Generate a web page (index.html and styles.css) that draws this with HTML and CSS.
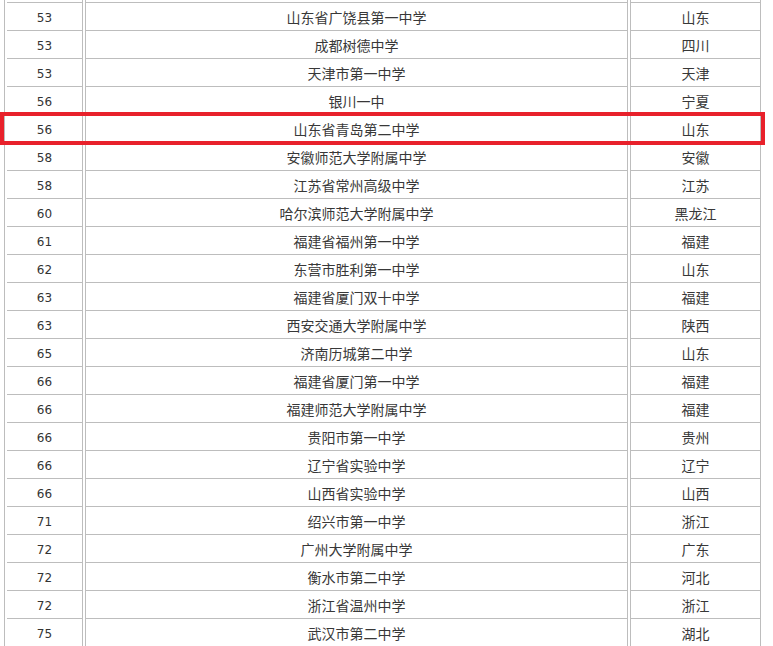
FILE: index.html
```html
<!DOCTYPE html>
<html lang="zh">
<head>
<meta charset="utf-8">
<link rel="stylesheet" href="styles.css">
</head>
<body>
<div class="wrap">
<table class="rank">
<tbody>
<tr><td class="c1">&nbsp;</td><td class="c2">&nbsp;</td><td class="c3">&nbsp;</td></tr>
<tr><td class="c1">53</td><td class="c2">山东省广饶县第一中学</td><td class="c3">山东</td></tr>
<tr><td class="c1">53</td><td class="c2">成都树德中学</td><td class="c3">四川</td></tr>
<tr><td class="c1">53</td><td class="c2">天津市第一中学</td><td class="c3">天津</td></tr>
<tr><td class="c1">56</td><td class="c2">银川一中</td><td class="c3">宁夏</td></tr>
<tr><td class="c1">56</td><td class="c2">山东省青岛第二中学</td><td class="c3">山东</td></tr>
<tr><td class="c1">58</td><td class="c2">安徽师范大学附属中学</td><td class="c3">安徽</td></tr>
<tr><td class="c1">58</td><td class="c2">江苏省常州高级中学</td><td class="c3">江苏</td></tr>
<tr><td class="c1">60</td><td class="c2">哈尔滨师范大学附属中学</td><td class="c3">黑龙江</td></tr>
<tr><td class="c1">61</td><td class="c2">福建省福州第一中学</td><td class="c3">福建</td></tr>
<tr><td class="c1">62</td><td class="c2">东营市胜利第一中学</td><td class="c3">山东</td></tr>
<tr><td class="c1">63</td><td class="c2">福建省厦门双十中学</td><td class="c3">福建</td></tr>
<tr><td class="c1">63</td><td class="c2">西安交通大学附属中学</td><td class="c3">陕西</td></tr>
<tr><td class="c1">65</td><td class="c2">济南历城第二中学</td><td class="c3">山东</td></tr>
<tr><td class="c1">66</td><td class="c2">福建省厦门第一中学</td><td class="c3">福建</td></tr>
<tr><td class="c1">66</td><td class="c2">福建师范大学附属中学</td><td class="c3">福建</td></tr>
<tr><td class="c1">66</td><td class="c2">贵阳市第一中学</td><td class="c3">贵州</td></tr>
<tr><td class="c1">66</td><td class="c2">辽宁省实验中学</td><td class="c3">辽宁</td></tr>
<tr><td class="c1">66</td><td class="c2">山西省实验中学</td><td class="c3">山西</td></tr>
<tr><td class="c1">71</td><td class="c2">绍兴市第一中学</td><td class="c3">浙江</td></tr>
<tr><td class="c1">72</td><td class="c2">广州大学附属中学</td><td class="c3">广东</td></tr>
<tr><td class="c1">72</td><td class="c2">衡水市第二中学</td><td class="c3">河北</td></tr>
<tr><td class="c1">72</td><td class="c2">浙江省温州中学</td><td class="c3">浙江</td></tr>
<tr><td class="c1">75</td><td class="c2">武汉市第二中学</td><td class="c3">湖北</td></tr>
</tbody>
</table>
<div class="highlight"></div>
</div>
</body>
</html>
```
FILE: styles.css
```css
html, body {
  margin: 0;
  padding: 0;
  background: #ffffff;
  overflow: hidden;
}
.wrap {
  position: relative;
  width: 773px;
  height: 646px;
  overflow: hidden;
}
.rank {
  margin-left: 4px;
  margin-top: -25px;
  border-collapse: separate;
  border-spacing: 2px 0;
  border-left: 1px solid #bdbdbd;
  font-family: "Noto Sans CJK SC", "Liberation Sans", sans-serif;
  font-size: 14px;
  color: #383838;
}
.rank td {
  box-sizing: border-box;
  height: 28px;
  padding: 5px 0 4px;
  line-height: 18px;
  text-align: center;
  border-bottom: 1px solid #bdbdbd;
  white-space: nowrap;
}
.rank td.c1 {
  width: 76px;
  border-right: 1px solid #bdbdbd;
  font-family: "DejaVu Sans", sans-serif;
  font-size: 12px;
  color: #333333;
  padding-top: 6px;
  padding-bottom: 3px;
}
.rank td.c2 {
  width: 543px;
  border-left: 1px solid #bdbdbd;
  border-right: 1px solid #bdbdbd;
}
.rank td.c3 {
  width: 131px;
  border-left: 1px solid #bdbdbd;
  border-right: 1px solid #bdbdbd;
}
.highlight {
  position: absolute;
  left: 0;
  top: 112px;
  width: 765px;
  height: 33px;
  box-sizing: border-box;
  border: 4px solid #e8212b;
}
```
